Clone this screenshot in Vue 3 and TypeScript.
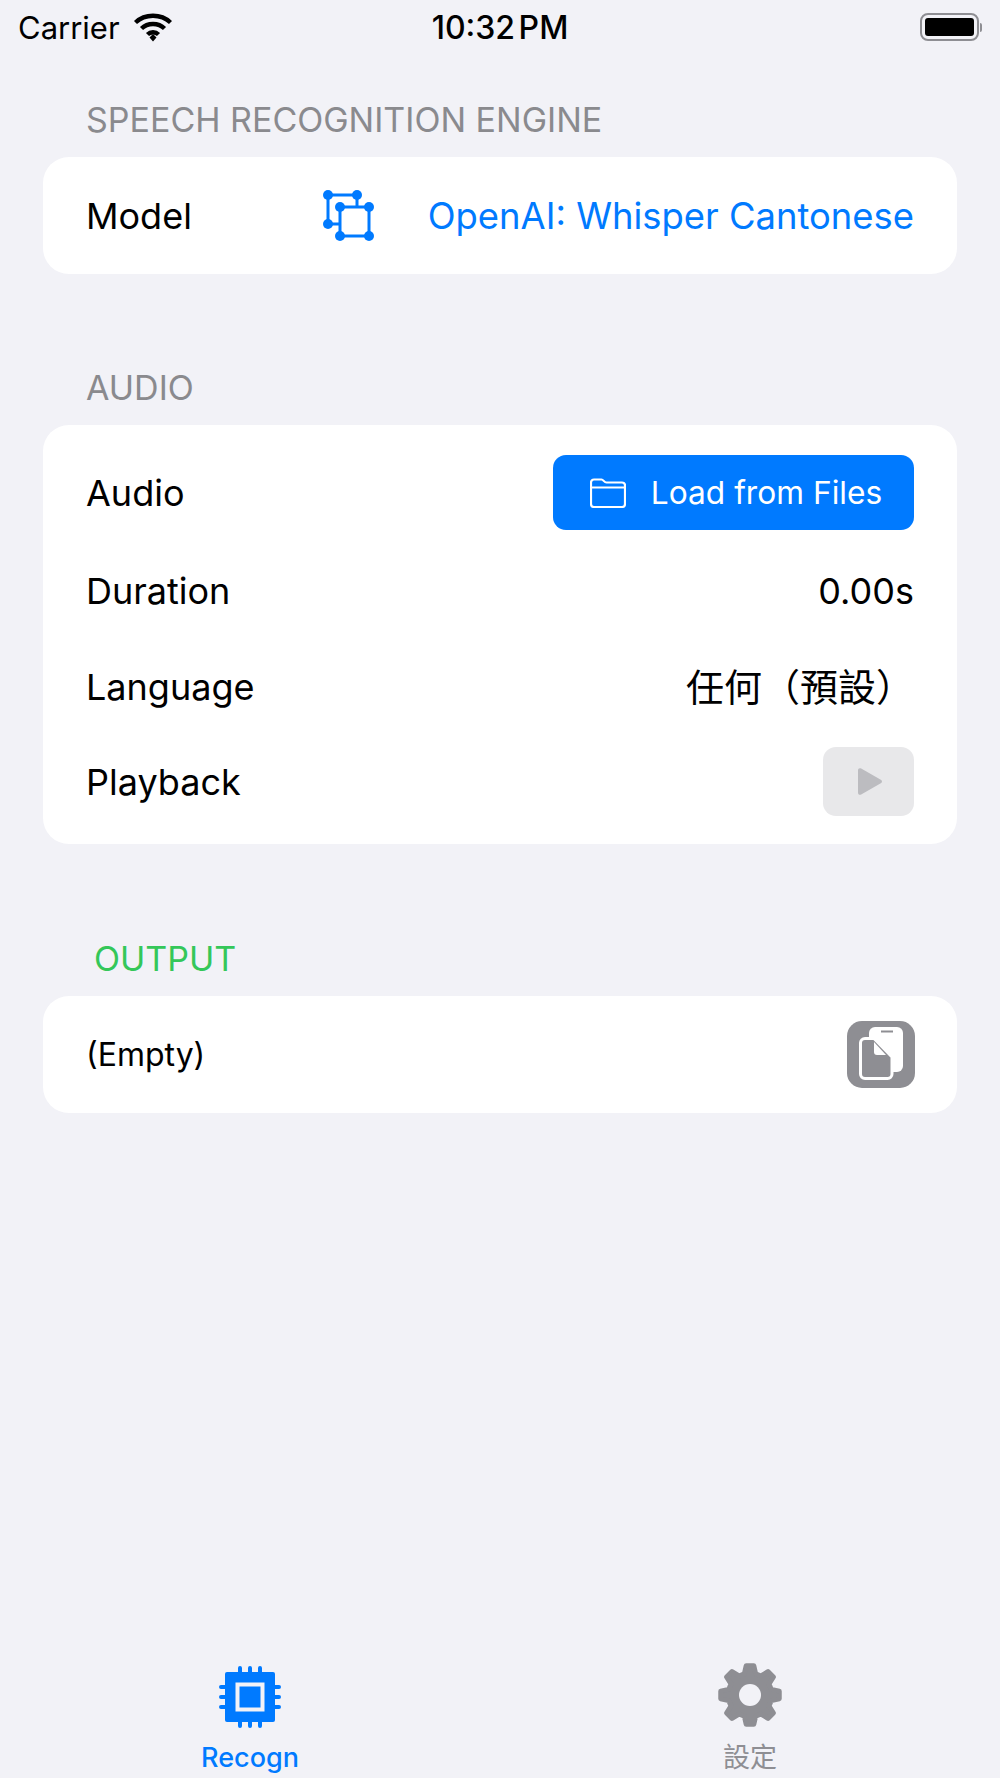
<template>
  <div class="page">
    <div class="status-bar">
      <div class="status-left">
        <span>Carrier</span>
        <svg class="wifi" viewBox="0 0 40 30" fill="none" stroke="#000" stroke-width="4.4">
          <path d="M2.5 10.5C12 1.5 28 1.5 37.5 10.5" />
          <path d="M8.5 16.5C14.5 10.5 25.5 10.5 31.5 16.5" />
          <path d="M14.5 22.5C17.5 19.5 22.5 19.5 25.5 22.5" />
          <path d="M16.5 25.5L20 22L23.5 25.5L20 29.5Z" fill="#000" stroke="none" />
        </svg>
      </div>
      <div class="status-time">10:32 PM</div>
      <div class="status-right">
        <div class="battery"><div class="battery-fill"></div></div>
        <div class="battery-nub"></div>
      </div>
    </div>

    <main class="content">
      <section class="section section-engine">
        <h2 class="section-title">SPEECH RECOGNITION ENGINE</h2>
        <div class="card card-engine">
          <span class="label">Model</span>
          <svg class="model-icon" viewBox="0 0 52 52" fill="none" stroke="#007aff" stroke-width="3">
            <path d="M5 5H34V17M5 5V34H17" />
            <rect x="17" y="17" width="29" height="29" />
            <g fill="#007aff" stroke="none">
              <circle v-for="dot in modelDots" :key="dot[0] + '-' + dot[1]" :cx="dot[0]" :cy="dot[1]" r="5" />
            </g>
          </svg>
          <span class="model-name">OpenAI: Whisper Cantonese</span>
        </div>
      </section>

      <section class="section section-audio">
        <h2 class="section-title">AUDIO</h2>
        <div class="card card-audio">
          <div class="row row-audio">
            <span class="label">Audio</span>
            <button class="load-btn" type="button">
              <svg class="folder" viewBox="0 0 36 30" fill="none" stroke="#fff" stroke-width="2.2" stroke-linejoin="round">
                <path d="M1 9V4.500A3 3 0 0 1 4 1.500H11.500C13.500 1.500 14 4.500 16.500 4.500H32A3 3 0 0 1 35 7.500V26A3 3 0 0 1 32 29H4A3 3 0 0 1 1 26Z" />
                <path d="M1 9.500H35" />
              </svg>
              <span>Load from Files</span>
            </button>
          </div>
          <div class="row">
            <span class="label">Duration</span>
            <span class="value">0.00s</span>
          </div>
          <div class="row row-language">
            <span class="label">Language</span>
            <span class="value value-cjk">任何（預設）</span>
          </div>
          <div class="row row-playback">
            <span class="label">Playback</span>
            <button class="play-btn" type="button" aria-label="Play">
              <svg viewBox="0 0 24 27" width="24" height="27"><path d="M0 2.500C0 .5 1.500-.4 3.200.5L22.800 11.800C24.400 12.700 24.400 14.300 22.800 15.200L3.200 26.500C1.500 27.400 0 26.500 0 24.500Z" fill="#bcbcc0" /></svg>
            </button>
          </div>
        </div>
      </section>

      <section class="section section-output">
        <h2 class="section-title output-title">OUTPUT</h2>
        <div class="card card-output">
          <span class="empty">(Empty)</span>
          <button class="copy-btn" type="button" aria-label="Copy">
            <svg viewBox="0 0 68 67" width="68" height="67">
              <rect x="22" y="6" width="34" height="45" rx="6" fill="#fff" />
              <path d="M34 10.500H46" stroke="#8e8e93" stroke-width="2" />
              <path d="M18 17.500H27L45 36V53A4.500 4.500 0 0 1 40.500 57.500H18A4.500 4.500 0 0 1 13.500 53V22A4.500 4.500 0 0 1 18 17.500Z" fill="#8e8e93" stroke="#fff" stroke-width="3" stroke-linejoin="round" />
              <path d="M27 21V31A3 3 0 0 0 30 34H39Z" fill="#fff" />
            </svg>
          </button>
        </div>
      </section>
    </main>

    <nav class="tab-bar">
      <div class="tab tab-active">
        <svg class="chip" viewBox="0 0 62 62">
          <rect x="6" y="6" width="50" height="50" rx="2" fill="#007aff" />
          <g stroke="#007aff" stroke-width="4" stroke-linecap="round">
            <path v-for="pos in chipPins" :key="pos" :d="`M${pos} 2V8M${pos} 54V60M2 ${pos}H8M54 ${pos}H60`" />
          </g>
          <rect x="18.500" y="18.500" width="25" height="25" fill="#007aff" stroke="#f2f2f7" stroke-width="4" />
        </svg>
        <span class="tab-label">Recogn</span>
      </div>
      <div class="tab">
        <svg class="gear" viewBox="0 0 66 66">
          <path :d="gearPath" fill="#8e8e93" stroke="#8e8e93" stroke-width="5" stroke-linejoin="round" />
          <circle cx="33" cy="33" r="11" fill="#f2f2f7" />
        </svg>
        <span class="tab-label tab-label-cjk">設定</span>
      </div>
    </nav>
  </div>
</template>

<script setup lang="ts">
const modelDots: number[][] = [
  [5, 5], [34, 5], [5, 34],
  [17, 17], [46, 17], [17, 46], [46, 46]
]

const chipPins = [21, 31, 41]

// Eight teeth, one pointing straight up
const buildGear = (center: number, rootR: number, tipR: number) => {
  const points: string[] = []
  for (let i = 0; i < 8; i++) {
    const mid = (i * Math.PI) / 4 - Math.PI / 2
    const corners: [number, number][] = [
      [rootR, -0.26],
      [tipR, -0.13],
      [tipR, 0.13],
      [rootR, 0.26]
    ]
    for (const [r, offset] of corners) {
      const x = center + r * Math.cos(mid + offset)
      const y = center + r * Math.sin(mid + offset)
      points.push(`${x.toFixed(2)} ${y.toFixed(2)}`)
    }
  }
  return 'M' + points.join('L') + 'Z'
}

const gearPath = buildGear(33, 22, 29.500)
</script>

<style>
html,
body {
  margin: 0;
  background: #f2f2f7;
}
</style>

<style scoped>
.page {
  display: flex;
  flex-direction: column;
  width: 1000px;
  height: 1778px;
  background: #f2f2f7;
  color: #000;
  font-family: Inter, "Noto Sans CJK TC", sans-serif;
  overflow: hidden;
}

.status-bar {
  display: grid;
  grid-template-columns: 1fr auto 1fr;
  align-items: center;
  height: 54px;
  padding: 0 18px;
  box-sizing: border-box;
  font-size: 31px;
}

.status-left {
  display: flex;
  align-items: center;
  gap: 13px;
}

.wifi {
  width: 40px;
  height: 30px;
}

.status-time {
  font-size: 32px;
  font-weight: 500;
  word-spacing: -5px;
}

.status-right {
  display: flex;
  align-items: center;
  justify-content: flex-end;
}

.battery {
  width: 59px;
  height: 28px;
  box-sizing: border-box;
  border: 2px solid #8e8e93;
  border-radius: 8px;
  padding: 3px;
}

.battery-fill {
  height: 100%;
  background: #000;
  border-radius: 3px;
}

.battery-nub {
  width: 2px;
  height: 9px;
  margin-left: 1px;
  background: #8e8e93;
  border-radius: 0 2px 2px 0;
}

.content {
  flex: 1;
  padding: 0 43px;
}

.section-engine {
  padding-top: 44px;
}

.section-audio {
  padding-top: 92px;
}

.section-output {
  padding-top: 93px;
}

.section-title {
  margin: 0 0 16px 43px;
  font-size: 34px;
  line-height: 43px;
  font-weight: 400;
  color: #8a8a8e;
}

.output-title {
  margin-left: 51px;
  color: #34c759;
}

.card {
  background: #fff;
  border-radius: 26px;
  padding: 0 43px;
  font-size: 36px;
}

.card-engine {
  display: flex;
  align-items: center;
  height: 117px;
}

.card-engine .label {
  flex: 1;
}

.model-icon {
  width: 52px;
  height: 52px;
  margin-right: 53px;
}

.model-name {
  color: #007aff;
  font-size: 36.4px;
}

.card-audio {
  display: flex;
  flex-direction: column;
  gap: 26px;
  padding-top: 30px;
  padding-bottom: 28px;
}

.row {
  display: flex;
  align-items: center;
  justify-content: space-between;
  height: 70px;
}

.row-audio {
  height: 75px;
}

.row-language,
.row-playback {
  height: 69px;
}

.value-cjk {
  padding-bottom: 4px;
  font-size: 38px;
}

.load-btn {
  display: flex;
  align-items: center;
  justify-content: center;
  gap: 25px;
  width: 361px;
  height: 75px;
  padding: 0 0 0 5px;
  border: none;
  border-radius: 13px;
  background: #007aff;
  color: #fff;
  font-family: inherit;
  font-size: 31.7px;
}

.folder {
  width: 36px;
  height: 30px;
}

.play-btn {
  display: flex;
  align-items: center;
  justify-content: center;
  width: 91px;
  height: 69px;
  padding: 0 0 0 3px;
  border: none;
  border-radius: 13px;
  background: #e8e8ea;
}

.card-output {
  display: flex;
  align-items: center;
  justify-content: space-between;
  height: 117px;
}

.empty {
  font-size: 32px;
}

.copy-btn {
  display: block;
  width: 68px;
  height: 67px;
  margin-right: -1px;
  padding: 0;
  border: none;
  border-radius: 15px;
  background: #8e8e93;
}

.copy-btn svg {
  display: block;
}

.tab-bar {
  display: grid;
  grid-template-columns: 1fr 1fr;
  height: 116px;
}

.tab {
  display: flex;
  flex-direction: column;
  align-items: center;
  color: #8e8e93;
}

.tab-active {
  color: #007aff;
}

.chip {
  width: 62px;
  height: 62px;
  margin-top: 4px;
  margin-bottom: 13px;
}

.gear {
  width: 66px;
  height: 66px;
  margin-bottom: 13px;
}

.tab-label {
  font-size: 27px;
  line-height: 34px;
  font-weight: 500;
}

.tab-label-cjk {
  font-weight: 400;
}
</style>
